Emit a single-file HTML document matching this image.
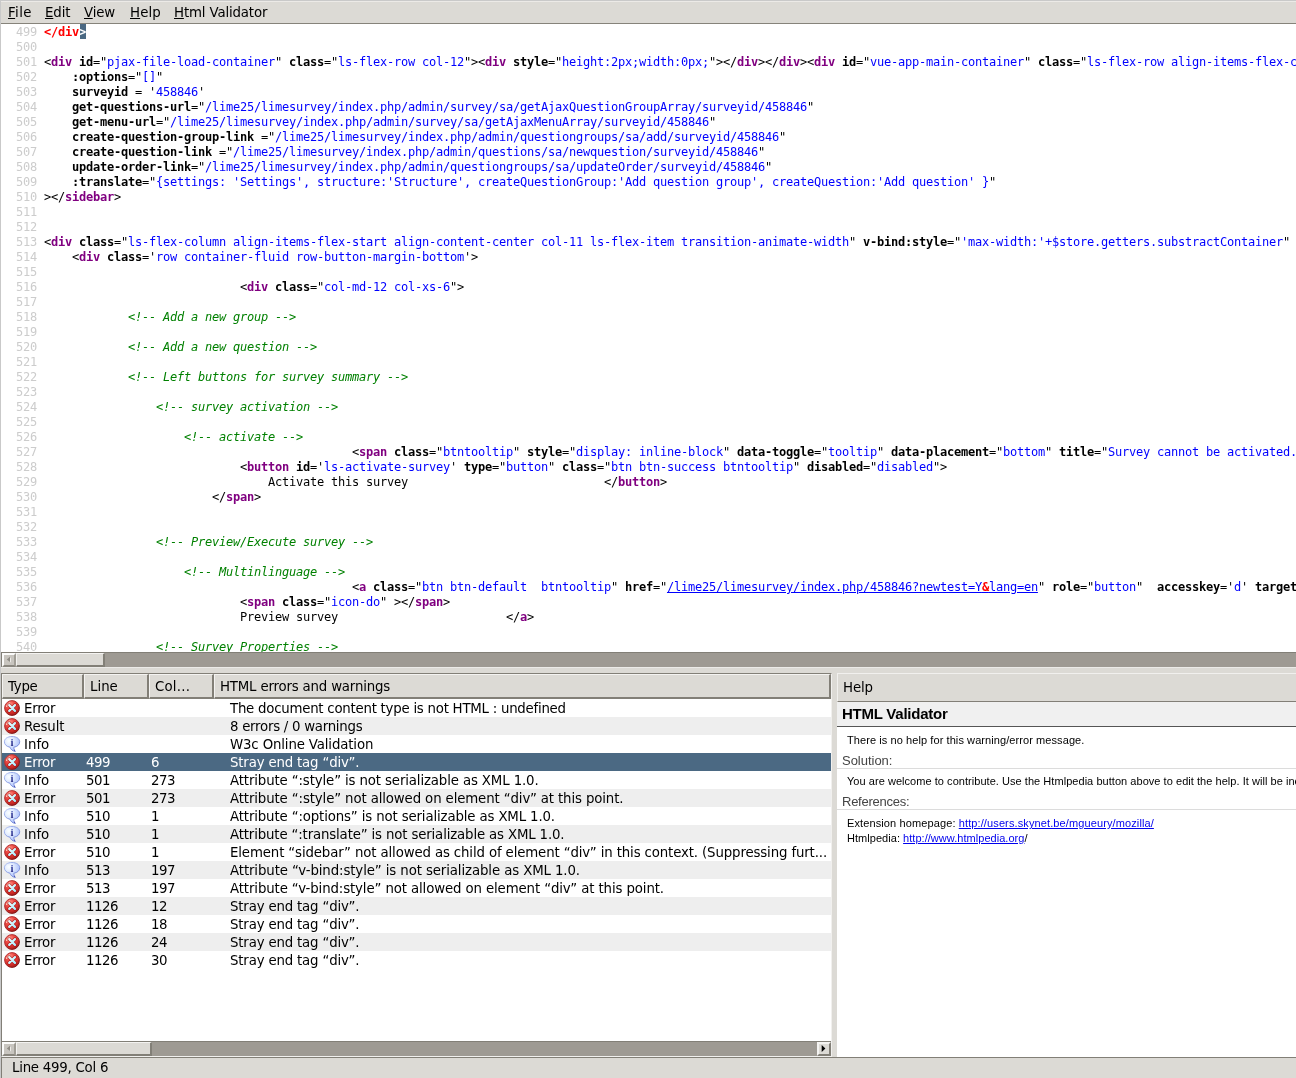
<!DOCTYPE html>
<html lang="en">
<head>
<meta charset="utf-8">
<title>Source of: limesurvey - HTML Validator</title>
<style>
html,body{margin:0;padding:0}
body{width:1296px;height:1078px;overflow:hidden;background:#dcdad5;position:relative;
  font-family:"DejaVu Sans","Liberation Sans",sans-serif;font-size:13.33px;color:#000;cursor:default}
#win{position:absolute;left:0;top:0;width:1296px;height:1078px;will-change:transform;overflow:hidden}
.abs{position:absolute}
/* window frame */
#frameL{left:0;top:0;width:1px;height:1078px;background:#c9c9c9}
#frameT{left:0;top:0;width:1296px;height:1px;background:#c9c9c9}
/* menubar */
#menubar{left:1px;top:1px;width:1295px;height:22px;background:#dcdad5;border-top:1px solid #eceae7;border-bottom:1px solid #86837a;box-sizing:content-box;height:21px}
#menubar span{position:absolute;top:2px;line-height:17px;white-space:pre}
#menubar span u{text-decoration:underline;text-underline-offset:1px}
/* source view */
#src{left:1px;top:24px;width:1295px;height:628px;background:#fff;overflow:hidden}
#src .pre{margin:0;font-family:"DejaVu Sans Mono","Liberation Mono",monospace;font-size:12px;letter-spacing:-0.2254px;line-height:15px}
.ln{height:15px;white-space:pre;padding-left:43px;position:relative;top:1px}
.ln .n{position:absolute;left:0;width:36px;text-align:right;color:#ccc}
#src b{font-weight:bold}
#src b.t{color:#800080}
#src b.e{color:#f00}
#src i.v{font-style:normal;color:#00f}
#src u.v{color:#00f;text-decoration:underline}
#src i.c{font-style:italic;color:#008000}
#src b.sel{background:linear-gradient(#4b6983,#4b6983) 1px 0/100% 100% no-repeat;color:#fff;padding-top:1px}
/* scrollbars */
.trough{background:#9e9a93}
.raised{background:#dcdad5;border-style:solid;border-width:1px 2px 2px 1px;border-color:#f4f3f1 #827f77 #827f77 #f4f3f1;box-sizing:border-box}
.stp{background:#c8c5bf;border-style:solid;border-width:2px;border-color:#fbfbfa #a19e96 #8a877f #fbfbfa;box-sizing:border-box;width:14px;height:14px}
.stp.on{background:#dcdad5;border-color:#f4f3f1 #827f77 #827f77 #f4f3f1}
/* tree */
#tree{left:1px;top:673px;width:831px;height:384px;background:#fff;border-style:solid;border-width:1px 1px 1px 1px;border-color:#827f77 #f1f0ee #f1f0ee #827f77;box-sizing:border-box;overflow:hidden}
.hd{position:absolute;top:0;height:25px;line-height:24px;padding-left:5px;white-space:pre}
.row{position:absolute;left:0;width:829px;height:18px;line-height:20px;white-space:pre;overflow:hidden}
.row.alt{background:#eeeeee}
.row.selr{background:#4b6983;color:#fff}
.row span{position:absolute;top:0}
.row .c1{left:22px}.row .c2{left:84px;letter-spacing:-0.48px}.row .c3{left:149px;letter-spacing:-0.48px}.row .c4{left:228px}
.row .ic{position:absolute;left:2px;top:1px;width:16px;height:16px;overflow:visible}
/* help */
#help{left:837px;top:673px;width:459px;height:384px;background:#fff;overflow:hidden}
#helphd{left:0;top:0;width:459px;height:29px;background:#dcdad5;border-style:solid;border-width:1px 0 1px 1px;border-color:#f1f0ee #827f77 #827f77 #f1f0ee;box-sizing:border-box;line-height:27px}
#help .ar{font-family:"Liberation Sans",sans-serif}
/* status */
#status{left:1px;top:1057px;width:1295px;height:21px;background:#dcdad5;border-top:1px solid #827f77;border-left:1px solid #827f77;box-sizing:border-box}
</style>
</head>
<body>
<div id="win">
<svg width="0" height="0" style="position:absolute">
<defs>
<radialGradient id="gr" cx="0.38" cy="0.28" r="0.75"><stop offset="0" stop-color="#ff9a8c"/><stop offset="0.35" stop-color="#f2504a"/><stop offset="0.75" stop-color="#d02c28"/><stop offset="1" stop-color="#9c1a18"/></radialGradient>
<linearGradient id="grs" x1="0" y1="0" x2="1" y2="1"><stop offset="0" stop-color="#c84a4a"/><stop offset="1" stop-color="#740a0a"/></linearGradient>
<linearGradient id="gx" gradientUnits="userSpaceOnUse" x1="4" y1="4" x2="12" y2="12"><stop offset="0" stop-color="#f4ffff"/><stop offset="1" stop-color="#a4eafc"/></linearGradient>
<radialGradient id="gb" cx="0.3" cy="0.3" r="0.8"><stop offset="0" stop-color="#fbffff"/><stop offset="0.45" stop-color="#dbe6fe"/><stop offset="0.8" stop-color="#b6c8fc"/><stop offset="1" stop-color="#c6e0ff"/></radialGradient>
<linearGradient id="gbs" x1="0" y1="0" x2="1" y2="1"><stop offset="0" stop-color="#aebff2"/><stop offset="1" stop-color="#667cd2"/></linearGradient>
<linearGradient id="gi" x1="0" y1="0" x2="0" y2="1"><stop offset="0" stop-color="#4c5ec4"/><stop offset="1" stop-color="#24247a"/></linearGradient>


</defs>
</svg>

<div id="menubar" class="abs">
<span style="left:7px;letter-spacing:0.4px"><u>F</u>ile</span>
<span style="left:44px;letter-spacing:-0.1px"><u>E</u>dit</span>
<span style="left:83px;letter-spacing:-0.15px"><u>V</u>iew</span>
<span style="left:129px;letter-spacing:0.1px"><u>H</u>elp</span>
<span style="left:173px;letter-spacing:-0.146px"><u>H</u>tml Validator</span>
</div>

<div id="src" class="abs"><div class="pre">
<div class="ln"><span class="n">499</span><b class="e">&lt;/div</b><b class="e sel">&gt;</b></div>
<div class="ln"><span class="n">500</span></div>
<div class="ln"><span class="n">501</span>&lt;<b class="t">div</b> <b>id</b>="<i class="v">pjax-file-load-container</i>" <b>class</b>="<i class="v">ls-flex-row col-12</i>"&gt;&lt;<b class="t">div</b> <b>style</b>="<i class="v">height:2px;width:0px;</i>"&gt;&lt;/<b class="t">div</b>&gt;&lt;/<b class="t">div</b>&gt;&lt;<b class="t">div</b> <b>id</b>="<i class="v">vue-app-main-container</i>" <b>class</b>="<i class="v">ls-flex-row align-items-flex-center</i>"&gt;</div>
<div class="ln"><span class="n">502</span>    <b>:options</b>="<i class="v">[]</i>"</div>
<div class="ln"><span class="n">503</span>    <b>surveyid</b> = '<i class="v">458846</i>'</div>
<div class="ln"><span class="n">504</span>    <b>get-questions-url</b>="<i class="v">/lime25/limesurvey/index.php/admin/survey/sa/getAjaxQuestionGroupArray/surveyid/458846</i>"</div>
<div class="ln"><span class="n">505</span>    <b>get-menu-url</b>="<i class="v">/lime25/limesurvey/index.php/admin/survey/sa/getAjaxMenuArray/surveyid/458846</i>"</div>
<div class="ln"><span class="n">506</span>    <b>create-question-group-link</b> ="<i class="v">/lime25/limesurvey/index.php/admin/questiongroups/sa/add/surveyid/458846</i>"</div>
<div class="ln"><span class="n">507</span>    <b>create-question-link</b> ="<i class="v">/lime25/limesurvey/index.php/admin/questions/sa/newquestion/surveyid/458846</i>"</div>
<div class="ln"><span class="n">508</span>    <b>update-order-link</b>="<i class="v">/lime25/limesurvey/index.php/admin/questiongroups/sa/updateOrder/surveyid/458846</i>"</div>
<div class="ln"><span class="n">509</span>    <b>:translate</b>="<i class="v">{settings: 'Settings', structure:'Structure', createQuestionGroup:'Add question group', createQuestion:'Add question' }</i>"</div>
<div class="ln"><span class="n">510</span>&gt;&lt;/<b class="t">sidebar</b>&gt;</div>
<div class="ln"><span class="n">511</span></div>
<div class="ln"><span class="n">512</span></div>
<div class="ln"><span class="n">513</span>&lt;<b class="t">div</b> <b>class</b>="<i class="v">ls-flex-column align-items-flex-start align-content-center col-11 ls-flex-item transition-animate-width</i>" <b>v-bind:style</b>="<i class="v">'max-width:'+$store.getters.substractContainer</i>" <b>id</b>="<i class="v">in_survey_common</i>"&gt;</div>
<div class="ln"><span class="n">514</span>    &lt;<b class="t">div</b> <b>class</b>='<i class="v">row container-fluid row-button-margin-bottom</i>'&gt;</div>
<div class="ln"><span class="n">515</span></div>
<div class="ln"><span class="n">516</span>                            &lt;<b class="t">div</b> <b>class</b>="<i class="v">col-md-12 col-xs-6</i>"&gt;</div>
<div class="ln"><span class="n">517</span></div>
<div class="ln"><span class="n">518</span>            <i class="c">&lt;!-- Add a new group --&gt;</i></div>
<div class="ln"><span class="n">519</span></div>
<div class="ln"><span class="n">520</span>            <i class="c">&lt;!-- Add a new question --&gt;</i></div>
<div class="ln"><span class="n">521</span></div>
<div class="ln"><span class="n">522</span>            <i class="c">&lt;!-- Left buttons for survey summary --&gt;</i></div>
<div class="ln"><span class="n">523</span></div>
<div class="ln"><span class="n">524</span>                <i class="c">&lt;!-- survey activation --&gt;</i></div>
<div class="ln"><span class="n">525</span></div>
<div class="ln"><span class="n">526</span>                    <i class="c">&lt;!-- activate --&gt;</i></div>
<div class="ln"><span class="n">527</span>                                            &lt;<b class="t">span</b> <b>class</b>="<i class="v">btntooltip</i>" <b>style</b>="<i class="v">display: inline-block</i>" <b>data-toggle</b>="<i class="v">tooltip</i>" <b>data-placement</b>="<i class="v">bottom</i>" <b>title</b>="<i class="v">Survey cannot be activated. Either you have no permission or there are no questions.</i>"&gt;</div>
<div class="ln"><span class="n">528</span>                            &lt;<b class="t">button</b> <b>id</b>='<i class="v">ls-activate-survey</i>' <b>type</b>="<i class="v">button</i>" <b>class</b>="<i class="v">btn btn-success btntooltip</i>" <b>disabled</b>="<i class="v">disabled</i>"&gt;</div>
<div class="ln"><span class="n">529</span>                                Activate this survey                            &lt;/<b class="t">button</b>&gt;</div>
<div class="ln"><span class="n">530</span>                        &lt;/<b class="t">span</b>&gt;</div>
<div class="ln"><span class="n">531</span></div>
<div class="ln"><span class="n">532</span></div>
<div class="ln"><span class="n">533</span>                <i class="c">&lt;!-- Preview/Execute survey --&gt;</i></div>
<div class="ln"><span class="n">534</span></div>
<div class="ln"><span class="n">535</span>                    <i class="c">&lt;!-- Multinlinguage --&gt;</i></div>
<div class="ln"><span class="n">536</span>                                            &lt;<b class="t">a</b> <b>class</b>="<i class="v">btn btn-default  btntooltip</i>" <b>href</b>="<u class="v">/lime25/limesurvey/index.php/458846?newtest=Y<b class="e">&amp;</b>lang=en</u>" <b>role</b>="<i class="v">button</i>"  <b>accesskey</b>='<i class="v">d</i>' <b>target</b>="<i class="v">_blank</i>"&gt;</div>
<div class="ln"><span class="n">537</span>                            &lt;<b class="t">span</b> <b>class</b>="<i class="v">icon-do</i>" &gt;&lt;/<b class="t">span</b>&gt;</div>
<div class="ln"><span class="n">538</span>                            Preview survey                        &lt;/<b class="t">a</b>&gt;</div>
<div class="ln"><span class="n">539</span></div>
<div class="ln"><span class="n">540</span>                <i class="c">&lt;!-- Survey Properties --&gt;</i></div>
</div></div>

<!-- horizontal scrollbar of source -->
<div class="abs trough" style="left:1px;top:652px;width:1295px;height:15px;border-top:1px solid #827f77;border-left:1px solid #827f77;box-sizing:border-box"></div>
<div class="abs" style="left:1px;top:667px;width:1295px;height:1px;background:#ecebe8"></div>
<div class="abs stp" style="left:2px;top:653px"></div>
<svg class="abs" style="left:6px;top:656px" width="6" height="7" viewBox="0 0 6 7"><path d="M5 1.5 L5 6.5 L2 4 Z" fill="#eeece8"/><path d="M4 0.8 L4 6 L0.8 3.4 Z" fill="#8f8c85"/></svg>
<div class="abs raised" style="left:16px;top:653px;width:89px;height:14px"></div>

<!-- tree -->
<div id="tree" class="abs">
<div class="hd raised" style="left:0;width:82px;letter-spacing:-0.267px">Type</div>
<div class="hd raised" style="left:82px;width:65px">Line</div>
<div class="hd raised" style="left:147px;width:65px;letter-spacing:0.2px">Col...</div>
<div class="hd raised" style="left:212px;width:617px;letter-spacing:-0.183px">HTML errors and warnings</div>
<div class="abs" style="left:0;top:25px;width:829px;height:342px" id="rows">
<div class="row" style="top:0px"><svg class="ic" viewBox="0 0 16 16"><circle cx="8" cy="8" r="7.4" fill="url(#gr)" stroke="url(#grs)" stroke-width="1"/><path d="M2.6 6.5 A5.6 5.6 0 0 1 5.7 2.9" fill="none" stroke="#ffe6d6" stroke-opacity="0.9" stroke-width="1.1" stroke-linecap="round"/><path d="M5.2 5.1 L11 10.9 M11 5.1 L5.2 10.9" stroke="#a81414" stroke-opacity="0.8" stroke-width="3.7" stroke-linecap="round"/><path d="M5.2 5.1 L11 10.9 M11 5.1 L5.2 10.9" stroke="url(#gx)" stroke-width="2.2" stroke-linecap="round"/></svg><span class="c1" style="letter-spacing:-0.25px">Error</span><span class="c2"></span><span class="c3"></span><span class="c4" style="letter-spacing:-0.246px">The document content type is not HTML : undefined</span></div>
<div class="row alt" style="top:18px"><svg class="ic" viewBox="0 0 16 16"><circle cx="8" cy="8" r="7.4" fill="url(#gr)" stroke="url(#grs)" stroke-width="1"/><path d="M2.6 6.5 A5.6 5.6 0 0 1 5.7 2.9" fill="none" stroke="#ffe6d6" stroke-opacity="0.9" stroke-width="1.1" stroke-linecap="round"/><path d="M5.2 5.1 L11 10.9 M11 5.1 L5.2 10.9" stroke="#a81414" stroke-opacity="0.8" stroke-width="3.7" stroke-linecap="round"/><path d="M5.2 5.1 L11 10.9 M11 5.1 L5.2 10.9" stroke="url(#gx)" stroke-width="2.2" stroke-linecap="round"/></svg><span class="c1" style="letter-spacing:-0.15px">Result</span><span class="c2"></span><span class="c3"></span><span class="c4" style="letter-spacing:-0.265px">8 errors / 0 warnings</span></div>
<div class="row" style="top:36px"><svg class="ic" viewBox="0 0 16 16"><path d="M8 0.5 C12.6 0.5 15.7 2.8 15.7 5.8 C15.7 8.6 13.4 10.7 9.8 11.2 C9.8 12.6 10.3 14.2 11.3 15.4 C9 15.2 6.6 13.6 6 11.2 C2.6 10.6 0.4 8.6 0.4 5.8 C0.4 2.8 3.4 0.5 8 0.5 Z" fill="url(#gb)" stroke="url(#gbs)" stroke-width="1"/><path d="M9.6 14.2 L11.4 15.5 L10.4 13.6 Z" fill="#3a3aa6"/><text x="8" y="9.8" text-anchor="middle" font-family="Liberation Serif,DejaVu Serif,serif" font-weight="bold" font-size="10.9" fill="url(#gi)">i</text></svg><span class="c1" style="letter-spacing:0.0px">Info</span><span class="c2"></span><span class="c3"></span><span class="c4" style="letter-spacing:-0.145px">W3c Online Validation</span></div>
<div class="row alt selr" style="top:54px"><svg class="ic" viewBox="0 0 16 16"><circle cx="8" cy="8" r="7.4" fill="url(#gr)" stroke="url(#grs)" stroke-width="1"/><path d="M2.6 6.5 A5.6 5.6 0 0 1 5.7 2.9" fill="none" stroke="#ffe6d6" stroke-opacity="0.9" stroke-width="1.1" stroke-linecap="round"/><path d="M5.2 5.1 L11 10.9 M11 5.1 L5.2 10.9" stroke="#a81414" stroke-opacity="0.8" stroke-width="3.7" stroke-linecap="round"/><path d="M5.2 5.1 L11 10.9 M11 5.1 L5.2 10.9" stroke="url(#gx)" stroke-width="2.2" stroke-linecap="round"/></svg><span class="c1" style="letter-spacing:-0.25px">Error</span><span class="c2">499</span><span class="c3">6</span><span class="c4" style="letter-spacing:-0.174px">Stray end tag “div”.</span></div>
<div class="row" style="top:72px"><svg class="ic" viewBox="0 0 16 16"><path d="M8 0.5 C12.6 0.5 15.7 2.8 15.7 5.8 C15.7 8.6 13.4 10.7 9.8 11.2 C9.8 12.6 10.3 14.2 11.3 15.4 C9 15.2 6.6 13.6 6 11.2 C2.6 10.6 0.4 8.6 0.4 5.8 C0.4 2.8 3.4 0.5 8 0.5 Z" fill="url(#gb)" stroke="url(#gbs)" stroke-width="1"/><path d="M9.6 14.2 L11.4 15.5 L10.4 13.6 Z" fill="#3a3aa6"/><text x="8" y="9.8" text-anchor="middle" font-family="Liberation Serif,DejaVu Serif,serif" font-weight="bold" font-size="10.9" fill="url(#gi)">i</text></svg><span class="c1" style="letter-spacing:0.0px">Info</span><span class="c2">501</span><span class="c3">273</span><span class="c4" style="letter-spacing:-0.135px">Attribute “:style” is not serializable as XML 1.0.</span></div>
<div class="row alt" style="top:90px"><svg class="ic" viewBox="0 0 16 16"><circle cx="8" cy="8" r="7.4" fill="url(#gr)" stroke="url(#grs)" stroke-width="1"/><path d="M2.6 6.5 A5.6 5.6 0 0 1 5.7 2.9" fill="none" stroke="#ffe6d6" stroke-opacity="0.9" stroke-width="1.1" stroke-linecap="round"/><path d="M5.2 5.1 L11 10.9 M11 5.1 L5.2 10.9" stroke="#a81414" stroke-opacity="0.8" stroke-width="3.7" stroke-linecap="round"/><path d="M5.2 5.1 L11 10.9 M11 5.1 L5.2 10.9" stroke="url(#gx)" stroke-width="2.2" stroke-linecap="round"/></svg><span class="c1" style="letter-spacing:-0.25px">Error</span><span class="c2">501</span><span class="c3">273</span><span class="c4" style="letter-spacing:-0.131px">Attribute “:style” not allowed on element “div” at this point.</span></div>
<div class="row" style="top:108px"><svg class="ic" viewBox="0 0 16 16"><path d="M8 0.5 C12.6 0.5 15.7 2.8 15.7 5.8 C15.7 8.6 13.4 10.7 9.8 11.2 C9.8 12.6 10.3 14.2 11.3 15.4 C9 15.2 6.6 13.6 6 11.2 C2.6 10.6 0.4 8.6 0.4 5.8 C0.4 2.8 3.4 0.5 8 0.5 Z" fill="url(#gb)" stroke="url(#gbs)" stroke-width="1"/><path d="M9.6 14.2 L11.4 15.5 L10.4 13.6 Z" fill="#3a3aa6"/><text x="8" y="9.8" text-anchor="middle" font-family="Liberation Serif,DejaVu Serif,serif" font-weight="bold" font-size="10.9" fill="url(#gi)">i</text></svg><span class="c1" style="letter-spacing:0.0px">Info</span><span class="c2">510</span><span class="c3">1</span><span class="c4" style="letter-spacing:-0.143px">Attribute “:options” is not serializable as XML 1.0.</span></div>
<div class="row alt" style="top:126px"><svg class="ic" viewBox="0 0 16 16"><path d="M8 0.5 C12.6 0.5 15.7 2.8 15.7 5.8 C15.7 8.6 13.4 10.7 9.8 11.2 C9.8 12.6 10.3 14.2 11.3 15.4 C9 15.2 6.6 13.6 6 11.2 C2.6 10.6 0.4 8.6 0.4 5.8 C0.4 2.8 3.4 0.5 8 0.5 Z" fill="url(#gb)" stroke="url(#gbs)" stroke-width="1"/><path d="M9.6 14.2 L11.4 15.5 L10.4 13.6 Z" fill="#3a3aa6"/><text x="8" y="9.8" text-anchor="middle" font-family="Liberation Serif,DejaVu Serif,serif" font-weight="bold" font-size="10.9" fill="url(#gi)">i</text></svg><span class="c1" style="letter-spacing:0.0px">Info</span><span class="c2">510</span><span class="c3">1</span><span class="c4" style="letter-spacing:-0.157px">Attribute “:translate” is not serializable as XML 1.0.</span></div>
<div class="row" style="top:144px"><svg class="ic" viewBox="0 0 16 16"><circle cx="8" cy="8" r="7.4" fill="url(#gr)" stroke="url(#grs)" stroke-width="1"/><path d="M2.6 6.5 A5.6 5.6 0 0 1 5.7 2.9" fill="none" stroke="#ffe6d6" stroke-opacity="0.9" stroke-width="1.1" stroke-linecap="round"/><path d="M5.2 5.1 L11 10.9 M11 5.1 L5.2 10.9" stroke="#a81414" stroke-opacity="0.8" stroke-width="3.7" stroke-linecap="round"/><path d="M5.2 5.1 L11 10.9 M11 5.1 L5.2 10.9" stroke="url(#gx)" stroke-width="2.2" stroke-linecap="round"/></svg><span class="c1" style="letter-spacing:-0.25px">Error</span><span class="c2">510</span><span class="c3">1</span><span class="c4" style="letter-spacing:-0.137px">Element “sidebar” not allowed as child of element “div” in this context. (Suppressing furt...</span></div>
<div class="row alt" style="top:162px"><svg class="ic" viewBox="0 0 16 16"><path d="M8 0.5 C12.6 0.5 15.7 2.8 15.7 5.8 C15.7 8.6 13.4 10.7 9.8 11.2 C9.8 12.6 10.3 14.2 11.3 15.4 C9 15.2 6.6 13.6 6 11.2 C2.6 10.6 0.4 8.6 0.4 5.8 C0.4 2.8 3.4 0.5 8 0.5 Z" fill="url(#gb)" stroke="url(#gbs)" stroke-width="1"/><path d="M9.6 14.2 L11.4 15.5 L10.4 13.6 Z" fill="#3a3aa6"/><text x="8" y="9.8" text-anchor="middle" font-family="Liberation Serif,DejaVu Serif,serif" font-weight="bold" font-size="10.9" fill="url(#gi)">i</text></svg><span class="c1" style="letter-spacing:0.0px">Info</span><span class="c2">513</span><span class="c3">197</span><span class="c4" style="letter-spacing:-0.111px">Attribute “v-bind:style” is not serializable as XML 1.0.</span></div>
<div class="row" style="top:180px"><svg class="ic" viewBox="0 0 16 16"><circle cx="8" cy="8" r="7.4" fill="url(#gr)" stroke="url(#grs)" stroke-width="1"/><path d="M2.6 6.5 A5.6 5.6 0 0 1 5.7 2.9" fill="none" stroke="#ffe6d6" stroke-opacity="0.9" stroke-width="1.1" stroke-linecap="round"/><path d="M5.2 5.1 L11 10.9 M11 5.1 L5.2 10.9" stroke="#a81414" stroke-opacity="0.8" stroke-width="3.7" stroke-linecap="round"/><path d="M5.2 5.1 L11 10.9 M11 5.1 L5.2 10.9" stroke="url(#gx)" stroke-width="2.2" stroke-linecap="round"/></svg><span class="c1" style="letter-spacing:-0.25px">Error</span><span class="c2">513</span><span class="c3">197</span><span class="c4" style="letter-spacing:-0.125px">Attribute “v-bind:style” not allowed on element “div” at this point.</span></div>
<div class="row alt" style="top:198px"><svg class="ic" viewBox="0 0 16 16"><circle cx="8" cy="8" r="7.4" fill="url(#gr)" stroke="url(#grs)" stroke-width="1"/><path d="M2.6 6.5 A5.6 5.6 0 0 1 5.7 2.9" fill="none" stroke="#ffe6d6" stroke-opacity="0.9" stroke-width="1.1" stroke-linecap="round"/><path d="M5.2 5.1 L11 10.9 M11 5.1 L5.2 10.9" stroke="#a81414" stroke-opacity="0.8" stroke-width="3.7" stroke-linecap="round"/><path d="M5.2 5.1 L11 10.9 M11 5.1 L5.2 10.9" stroke="url(#gx)" stroke-width="2.2" stroke-linecap="round"/></svg><span class="c1" style="letter-spacing:-0.25px">Error</span><span class="c2">1126</span><span class="c3">12</span><span class="c4" style="letter-spacing:-0.174px">Stray end tag “div”.</span></div>
<div class="row" style="top:216px"><svg class="ic" viewBox="0 0 16 16"><circle cx="8" cy="8" r="7.4" fill="url(#gr)" stroke="url(#grs)" stroke-width="1"/><path d="M2.6 6.5 A5.6 5.6 0 0 1 5.7 2.9" fill="none" stroke="#ffe6d6" stroke-opacity="0.9" stroke-width="1.1" stroke-linecap="round"/><path d="M5.2 5.1 L11 10.9 M11 5.1 L5.2 10.9" stroke="#a81414" stroke-opacity="0.8" stroke-width="3.7" stroke-linecap="round"/><path d="M5.2 5.1 L11 10.9 M11 5.1 L5.2 10.9" stroke="url(#gx)" stroke-width="2.2" stroke-linecap="round"/></svg><span class="c1" style="letter-spacing:-0.25px">Error</span><span class="c2">1126</span><span class="c3">18</span><span class="c4" style="letter-spacing:-0.174px">Stray end tag “div”.</span></div>
<div class="row alt" style="top:234px"><svg class="ic" viewBox="0 0 16 16"><circle cx="8" cy="8" r="7.4" fill="url(#gr)" stroke="url(#grs)" stroke-width="1"/><path d="M2.6 6.5 A5.6 5.6 0 0 1 5.7 2.9" fill="none" stroke="#ffe6d6" stroke-opacity="0.9" stroke-width="1.1" stroke-linecap="round"/><path d="M5.2 5.1 L11 10.9 M11 5.1 L5.2 10.9" stroke="#a81414" stroke-opacity="0.8" stroke-width="3.7" stroke-linecap="round"/><path d="M5.2 5.1 L11 10.9 M11 5.1 L5.2 10.9" stroke="url(#gx)" stroke-width="2.2" stroke-linecap="round"/></svg><span class="c1" style="letter-spacing:-0.25px">Error</span><span class="c2">1126</span><span class="c3">24</span><span class="c4" style="letter-spacing:-0.174px">Stray end tag “div”.</span></div>
<div class="row" style="top:252px"><svg class="ic" viewBox="0 0 16 16"><circle cx="8" cy="8" r="7.4" fill="url(#gr)" stroke="url(#grs)" stroke-width="1"/><path d="M2.6 6.5 A5.6 5.6 0 0 1 5.7 2.9" fill="none" stroke="#ffe6d6" stroke-opacity="0.9" stroke-width="1.1" stroke-linecap="round"/><path d="M5.2 5.1 L11 10.9 M11 5.1 L5.2 10.9" stroke="#a81414" stroke-opacity="0.8" stroke-width="3.7" stroke-linecap="round"/><path d="M5.2 5.1 L11 10.9 M11 5.1 L5.2 10.9" stroke="url(#gx)" stroke-width="2.2" stroke-linecap="round"/></svg><span class="c1" style="letter-spacing:-0.25px">Error</span><span class="c2">1126</span><span class="c3">30</span><span class="c4" style="letter-spacing:-0.174px">Stray end tag “div”.</span></div>
</div>
<!-- tree hscrollbar -->
<div class="abs" style="left:-1px;top:367px;width:831px;height:15px;background:#fff"></div>
<div class="abs trough" style="left:-1px;top:367px;width:830px;height:15px;border-top:1px solid #827f77;border-left:1px solid #827f77;box-sizing:border-box"></div>
<div class="abs stp" style="left:0;top:368px"></div>
<svg class="abs" style="left:4px;top:371px" width="6" height="7" viewBox="0 0 6 7"><path d="M5 1.5 L5 6.5 L2 4 Z" fill="#eeece8"/><path d="M4 0.8 L4 6 L0.8 3.4 Z" fill="#8f8c85"/></svg>
<div class="abs raised" style="left:14px;top:368px;width:136px;height:14px"></div>
<div class="abs stp on" style="left:815px;top:368px"></div>
<svg class="abs" style="left:819px;top:371px" width="5" height="7" viewBox="0 0 5 7"><path d="M0.7 0 L0.7 7 L4.4 3.5 Z" fill="#000"/></svg>
</div>

<!-- help pane -->
<div id="help" class="abs">
<div id="helphd" class="abs"><span style="position:absolute;left:5px;top:0;letter-spacing:-0.113px">Help</span></div>
<div class="abs ar" style="left:0;top:29px;width:459px;height:24px;background:#f0f0f0;border-bottom:1px solid #555;font-weight:bold;font-size:15px;line-height:24px;white-space:pre;letter-spacing:-0.238px"><span style="position:absolute;left:5px;top:0">HTML Validator</span></div>
<div class="abs ar" style="left:10px;top:60px;font-size:11px;line-height:15px;white-space:pre;letter-spacing:0.081px">There is no help for this warning/error message.</div>
<div class="abs ar" style="left:0;top:78px;width:459px;height:17px;border-bottom:1px solid #dcdcdc;font-size:13px;line-height:19px;color:#444;white-space:pre"><span style="position:absolute;left:5px;top:0;letter-spacing:-0.02px">Solution:</span></div>
<div class="abs ar" style="left:10px;top:101px;font-size:11px;line-height:15px;white-space:pre;letter-spacing:0.044px">You are welcome to contribute. Use the Htmlpedia button above to edit the help. It will be included in the next release.</div>
<div class="abs ar" style="left:0;top:119px;width:459px;height:17px;border-bottom:1px solid #dcdcdc;font-size:13px;line-height:19px;color:#444;white-space:pre"><span style="position:absolute;left:5px;top:0;letter-spacing:-0.26px">References:</span></div>
<div class="abs ar" style="left:10px;top:143px;font-size:11px;line-height:15px;white-space:pre;letter-spacing:0.113px">Extension homepage: <span style="color:#0000ee;text-decoration:underline">http://users.skynet.be/mgueury/mozilla/</span></div>
<div class="abs ar" style="left:10px;top:158px;font-size:11px;line-height:14px;white-space:pre;letter-spacing:0.04px">Htmlpedia: <span style="color:#0000ee;text-decoration:underline">http://www.htmlpedia.org</span>/</div>
</div>

<!-- statusbar -->
<div id="status" class="abs"><span style="position:absolute;left:10px;top:0;line-height:20px;white-space:pre;letter-spacing:-0.24px">Line 499, Col 6</span></div>

<div id="frameL" class="abs"></div>
<div id="frameT" class="abs"></div>
</div>
</body>
</html>
